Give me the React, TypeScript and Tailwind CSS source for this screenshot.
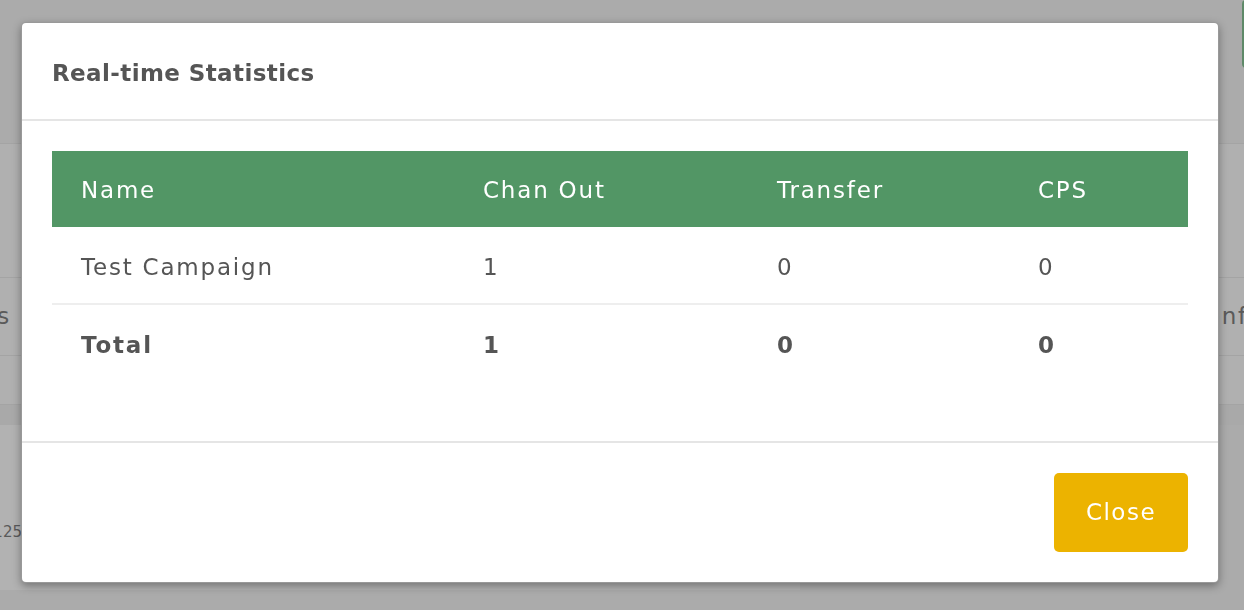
const font = { fontFamily: '"DejaVu Sans", "Open Sans", sans-serif' };

function Backdrop() {
  return (
    <div className="h-[610px] w-[1244px] overflow-hidden bg-[#ababab] text-[#5a5a5a]" style={font}>
      <div className="flex h-[143px] justify-end">
        <div className="mr-[-40px] h-[68px] w-[42px] rounded-[4px] bg-[#5f8a69]" />
      </div>
      <div className="h-[135px] border-y border-[#a4a4a4] bg-[#b0b0b0]" />
      <div className="flex h-[77px] items-center bg-[#b0b0b0] text-[23px] tracking-[1.8px]">
        <div className="flex w-[11px] justify-end whitespace-nowrap">Campaigns</div>
        <div className="flex-1" />
        <div className="w-[56px] whitespace-nowrap">Config</div>
      </div>
      <div className="h-[50px] border-y border-[#a4a4a4] bg-[#b0b0b0]" />
      <div className="h-[20px] bg-[#a9a9a9]" />
      <div className="flex h-[165px]">
        <div className="flex w-[800px] items-center bg-[#b2b2b2] pt-[50px] text-[15px]">
          <div className="flex w-[22px] justify-end">125</div>
        </div>
        <div className="flex-1 bg-[#ababab]" />
      </div>
    </div>
  );
}

function StatsModal() {
  const cols = "grid grid-cols-[401px_294px_261px_180px] text-[23px] tracking-[1.8px]";
  return (
    <div className="fixed left-[21px] top-[22px] w-[1198px] rounded-[5px] border border-black/40 bg-white shadow-[0_3px_9px_rgba(0,0,0,0.35)]" style={font}>
      <div className="flex h-[98px] items-center border-b-2 border-[#e5e5e5] px-[30px] pt-[4px]">
        <h4 className="text-[23px] font-bold tracking-[0.4px] text-[#555]">Real-time Statistics</h4>
      </div>
      <div className="h-[320px] px-[30px] pt-[30px]">
        <div className={`${cols} h-[76px] items-center bg-[#529665] pt-[3px] text-white`}>
          <div className="pl-[29px]">Name</div>
          <div className="pl-[30px]">Chan Out</div>
          <div className="pl-[30px]">Transfer</div>
          <div className="pl-[30px]">CPS</div>
        </div>
        <div className={`${cols} h-[78px] items-center border-b-2 border-[#eeeeee] pt-[4px] text-[#555]`}>
          <div className="pl-[29px]">Test Campaign</div>
          <div className="pl-[30px]">1</div>
          <div className="pl-[30px]">0</div>
          <div className="pl-[30px]">0</div>
        </div>
        <div className={`${cols} h-[78px] items-center pt-[2px] font-bold text-[#555]`}>
          <div className="pl-[29px]">Total</div>
          <div className="pl-[30px]">1</div>
          <div className="pl-[30px]">0</div>
          <div className="pl-[30px]">0</div>
        </div>
      </div>
      <div className="flex h-[141px] items-start justify-end border-t-2 border-[#e5e5e5] px-[30px] pt-[30px]">
        <button className="h-[79px] w-[134px] rounded-[5px] bg-[#ecb300] text-[23px] tracking-[1.5px] text-white">Close</button>
      </div>
    </div>
  );
}

export default function App() {
  return (
    <div className="relative">
      <Backdrop />
      <StatsModal />
    </div>
  );
}
